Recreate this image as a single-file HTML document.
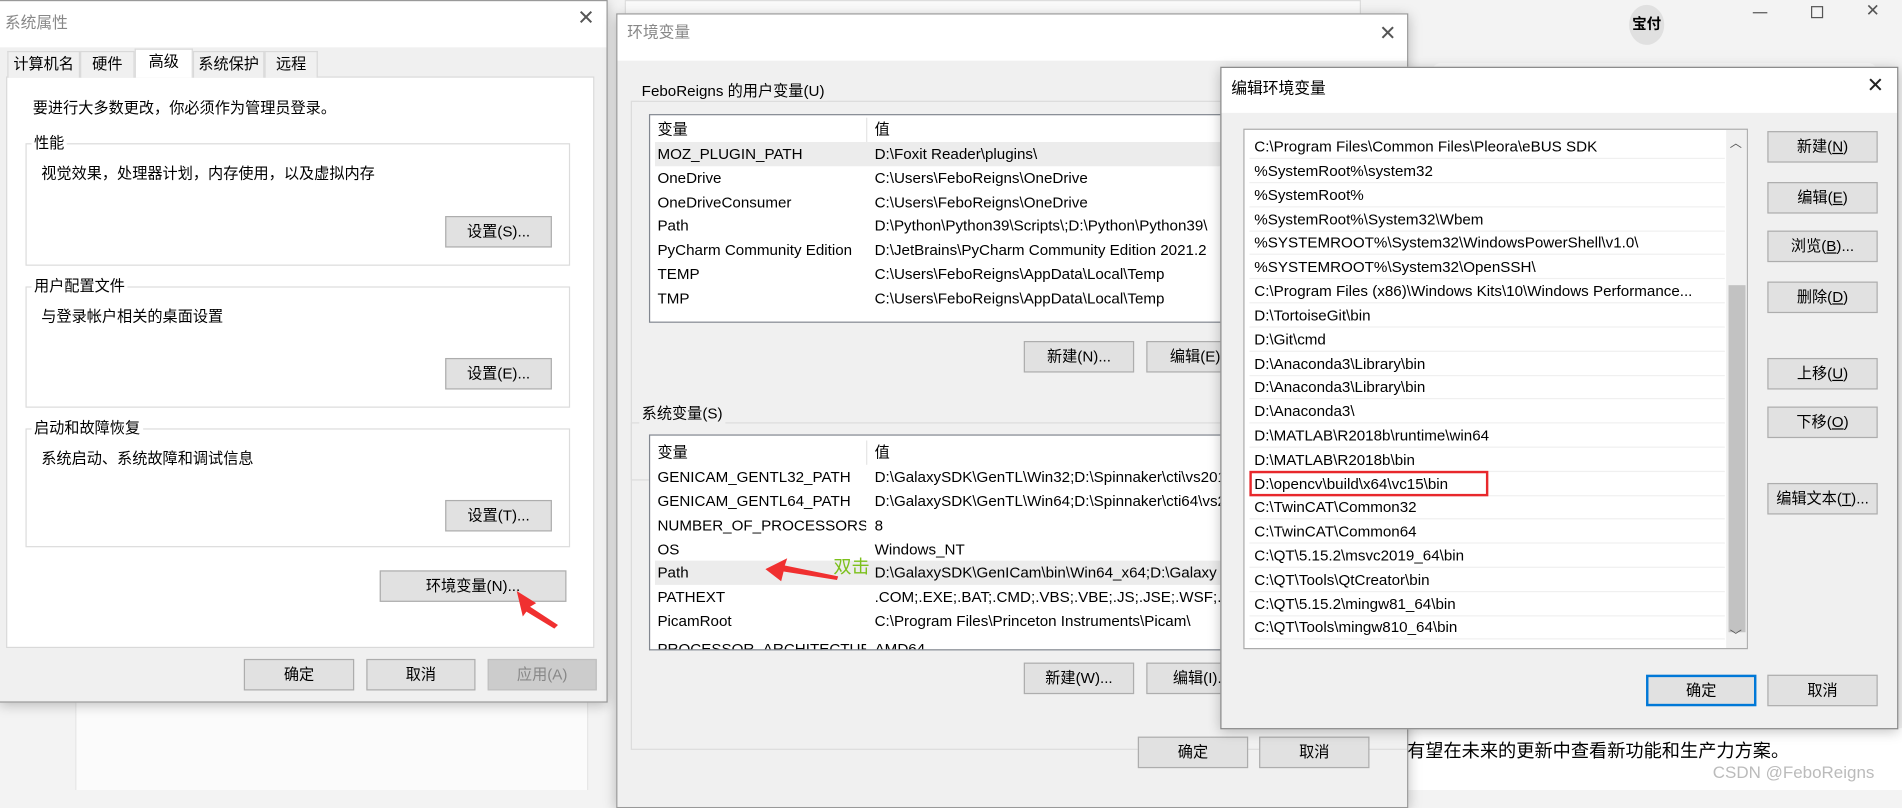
<!DOCTYPE html>
<html><head><meta charset="utf-8"><style>
html,body{margin:0;padding:0;width:1902px;height:790px;overflow:hidden;background:#f3f3f3}
#w{position:absolute;left:0;top:0;width:1568px;height:651px;transform:scale(1.2130,1.2135);transform-origin:0 0;font-family:"Liberation Sans","Noto Sans CJK SC",sans-serif;font-size:12.5px;color:#000}
.a{position:absolute}
.t{position:absolute;white-space:nowrap;line-height:16px}
.btn{position:absolute;background:#e1e1e1;border:1px solid #adadad;box-sizing:border-box;text-align:center;line-height:24px;height:26px;white-space:nowrap}
.dlg{position:absolute;background:#f0f0f0;border:1px solid #999;box-sizing:border-box;box-shadow:0 2px 10px rgba(0,0,0,.25);overflow:hidden}
.tb{position:absolute;left:0;right:0;top:0;background:#fff}
.x{position:absolute;font-size:17px;color:#555;font-family:"DejaVu Sans",sans-serif}
.grp{position:absolute;border:1px solid #dcdcdc}
.gl{position:absolute;padding:0 2px;white-space:nowrap;line-height:16px}
.list{position:absolute;background:#fff;border:1px solid #828790;box-sizing:border-box;overflow:hidden}
.row{position:absolute;left:0;right:0;height:20px;line-height:20px;white-space:nowrap}
.row span{position:absolute}
.row span:first-child{width:172px;overflow:hidden}
.er{position:absolute;left:4px;width:392px;height:20px;line-height:20px;border-bottom:1px solid #f0f0f0;box-sizing:border-box;padding-left:4px;white-space:nowrap}
.tab{position:absolute;height:22px;border:1px solid #d9d9d9;border-bottom:none;box-sizing:border-box;background:#f0f0f0;text-align:center;line-height:21px}
u{text-decoration:underline}
</style></head><body><div id="w">
<div class="a" style="left:62px;top:578px;width:421px;height:73px;background:#fbfbfb;border-left:1px solid #e5e5e5;border-right:1px solid #e5e5e5"></div>
<div class="a" style="left:1180px;top:52px;width:368px;height:599px;background:#fbfbfb;border-radius:8px"></div>
<div class="a" style="left:1160px;top:600px;width:408px;height:51px;background:#fff"></div>
<div class="a" style="left:515px;top:0;width:605px;height:14px;background:#fafafa;border:1px solid #ddd"></div>
<div class="a" style="left:1343px;top:4px;width:29px;height:33px;border-radius:50%;background:#e0e0e0;text-align:center;line-height:33px;font-weight:bold;font-size:12px">宝付</div>
<div class="a" style="left:1445px;top:10px;width:12px;height:1px;background:#555"></div>
<div class="a" style="left:1493px;top:5px;width:8px;height:8px;border:1px solid #555"></div>
<div class="x" style="left:1538px;top:1px;font-size:14px">✕</div>
<div class="t" style="left:1160px;top:612px;font-size:15px">有望在未来的更新中查看新功能和生产力方案。</div>
<div class="t" style="left:1412px;top:628px;font-size:14px;color:#bbb">CSDN @FeboReigns</div>

<div class="dlg" style="left:-1px;top:0;width:502px;height:579px">
 <div class="tb" style="height:38px"></div>
 <div class="t" style="left:4px;top:10px;color:#888;font-size:13px">系统属性</div>
 <div class="x" style="left:476px;top:4px">✕</div>
 <div class="a" style="left:5px;top:62px;width:485px;height:471px;background:#fff;border:1px solid #d9d9d9;box-sizing:border-box"></div>
 <div class="tab" style="left:6px;top:41px;width:60px">计算机名</div>
 <div class="tab" style="left:66px;top:41px;width:45px">硬件</div>
 <div class="tab" style="left:111px;top:39px;width:48px;height:24px;background:#fff;border-bottom:none">高级</div>
 <div class="tab" style="left:159px;top:41px;width:59px">系统保护</div>
 <div class="tab" style="left:218px;top:41px;width:44px">远程</div>
 <div class="t" style="left:27px;top:80px">要进行大多数更改，你必须作为管理员登录。</div>
 <div class="grp" style="left:21px;top:117px;width:447px;height:99px"></div><div class="gl" style="left:26px;top:109px;background:#fff">性能</div>
 <div class="t" style="left:34px;top:134px">视觉效果，处理器计划，内存使用，以及虚拟内存</div>
 <div class="btn" style="left:367px;top:177px;width:88px">设置(S)...</div>
 <div class="grp" style="left:21px;top:235px;width:447px;height:98px"></div><div class="gl" style="left:26px;top:227px;background:#fff">用户配置文件</div>
 <div class="t" style="left:34px;top:252px">与登录帐户相关的桌面设置</div>
 <div class="btn" style="left:367px;top:294px;width:88px">设置(E)...</div>
 <div class="grp" style="left:21px;top:352px;width:447px;height:96px"></div><div class="gl" style="left:26px;top:344px;background:#fff">启动和故障恢复</div>
 <div class="t" style="left:34px;top:369px">系统启动、系统故障和调试信息</div>
 <div class="btn" style="left:367px;top:411px;width:88px">设置(T)...</div>
 <div class="btn" style="left:313px;top:469px;width:154px">环境变量(N)...</div>
 <div class="btn" style="left:201px;top:542px;width:91px">确定</div>
 <div class="btn" style="left:302px;top:542px;width:90px">取消</div>
 <div class="btn" style="left:402px;top:542px;width:90px;background:#cccccc;border-color:#bfbfbf;color:#888">应用(A)</div>
 <svg class="a" style="left:410px;top:480px" width="60" height="45"><polygon points="16,6 32,16 27,19 50,34 47,37 24,23 21,27" fill="#f03030"/></svg>
</div>

<div class="dlg" style="left:508px;top:11px;width:653px;height:655px">
 <div class="tb" style="height:38px"></div>
 <div class="t" style="left:8px;top:7px;color:#888;font-size:13px">环境变量</div>
 <div class="x" style="left:628px;top:6px">✕</div>
 <div class="grp" style="left:11px;top:71px;width:640px;height:311px"></div>
 <div class="gl" style="left:18px;top:55px;background:#f0f0f0">FeboReigns 的用户变量(U)</div>
 <div class="list" style="left:26px;top:82px;width:620px;height:172px">
  <div class="row" style="top:2px"><span style="left:6px">变量</span><span style="left:185px">值</span></div>
  <div class="a" style="left:178px;top:2px;width:1px;height:20px;background:#e5e5e5"></div>
  <div class="row" style="top:22px;background:#ececec;left:4px"><span style="left:2px">MOZ_PLUGIN_PATH</span><span style="left:181px">D:\Foxit Reader\plugins\</span></div>
  <div class="row" style="top:42px"><span style="left:6px">OneDrive</span><span style="left:185px">C:\Users\FeboReigns\OneDrive</span></div>
  <div class="row" style="top:62px"><span style="left:6px">OneDriveConsumer</span><span style="left:185px">C:\Users\FeboReigns\OneDrive</span></div>
  <div class="row" style="top:81px"><span style="left:6px">Path</span><span style="left:185px">D:\Python\Python39\Scripts\;D:\Python\Python39\</span></div>
  <div class="row" style="top:101px"><span style="left:6px">PyCharm Community Edition</span><span style="left:185px">D:\JetBrains\PyCharm Community Edition 2021.2</span></div>
  <div class="row" style="top:121px"><span style="left:6px">TEMP</span><span style="left:185px">C:\Users\FeboReigns\AppData\Local\Temp</span></div>
  <div class="row" style="top:141px"><span style="left:6px">TMP</span><span style="left:185px">C:\Users\FeboReigns\AppData\Local\Temp</span></div>
 </div>
 <div class="btn" style="left:335px;top:269px;width:91px">新建(N)...</div>
 <div class="btn" style="left:436px;top:269px;width:91px">编辑(E)...</div>
 <div class="grp" style="left:11px;top:336px;width:640px;height:268px"></div>
 <div class="gl" style="left:18px;top:321px;background:#f0f0f0">系统变量(S)</div>
 <div class="list" style="left:26px;top:346px;width:620px;height:178px">
  <div class="row" style="top:4px"><span style="left:6px">变量</span><span style="left:185px">值</span></div>
  <div class="a" style="left:178px;top:4px;width:1px;height:20px;background:#e5e5e5"></div>
  <div class="row" style="top:24px"><span style="left:6px">GENICAM_GENTL32_PATH</span><span style="left:185px">D:\GalaxySDK\GenTL\Win32;D:\Spinnaker\cti\vs2015</span></div>
  <div class="row" style="top:44px"><span style="left:6px">GENICAM_GENTL64_PATH</span><span style="left:185px">D:\GalaxySDK\GenTL\Win64;D:\Spinnaker\cti64\vs2015</span></div>
  <div class="row" style="top:64px"><span style="left:6px">NUMBER_OF_PROCESSORS</span><span style="left:185px">8</span></div>
  <div class="row" style="top:84px"><span style="left:6px">OS</span><span style="left:185px">Windows_NT</span></div>
  <div class="row" style="top:103px;background:#ececec;left:4px"><span style="left:2px">Path</span><span style="left:181px">D:\GalaxySDK\GenICam\bin\Win64_x64;D:\Galaxy</span></div>
  <div class="row" style="top:123px"><span style="left:6px">PATHEXT</span><span style="left:185px">.COM;.EXE;.BAT;.CMD;.VBS;.VBE;.JS;.JSE;.WSF;.WSH</span></div>
  <div class="row" style="top:143px"><span style="left:6px">PicamRoot</span><span style="left:185px">C:\Program Files\Princeton Instruments\Picam\</span></div>
  <div class="row" style="top:166px"><span style="left:6px">PROCESSOR_ARCHITECTURE</span><span style="left:185px">AMD64</span></div>
 </div>
 <svg class="a" style="left:118px;top:445px" width="70" height="30"><polygon points="4,12 22,3 20,9 64,18 63,21 19,14 17,22" fill="#f03030"/></svg>
 <div class="t" style="left:178px;top:448px;color:#7cc01c;font-size:15px">双击</div>
 <div class="btn" style="left:335px;top:534px;width:91px">新建(W)...</div>
 <div class="btn" style="left:436px;top:534px;width:91px">编辑(I)...</div>
 <div class="btn" style="left:429px;top:595px;width:91px">确定</div>
 <div class="btn" style="left:529px;top:595px;width:91px">取消</div>
</div>

<div class="dlg" style="left:1006px;top:55px;width:559px;height:546px;border-color:#888">
 <div class="tb" style="height:37px"></div>
 <div class="t" style="left:8px;top:9px;font-size:13px">编辑环境变量</div>
 <div class="x" style="left:532px;top:5px;color:#222">✕</div>
 <div class="list" style="left:18px;top:50px;width:416px;height:429px;border-color:#aaa">
  <div class="er" style="top:4px">C:\Program Files\Common Files\Pleora\eBUS SDK</div>
  <div class="er" style="top:24px">%SystemRoot%\system32</div>
  <div class="er" style="top:44px">%SystemRoot%</div>
  <div class="er" style="top:64px">%SystemRoot%\System32\Wbem</div>
  <div class="er" style="top:83px">%SYSTEMROOT%\System32\WindowsPowerShell\v1.0\</div>
  <div class="er" style="top:103px">%SYSTEMROOT%\System32\OpenSSH\</div>
  <div class="er" style="top:123px">C:\Program Files (x86)\Windows Kits\10\Windows Performance...</div>
  <div class="er" style="top:143px">D:\TortoiseGit\bin</div>
  <div class="er" style="top:163px">D:\Git\cmd</div>
  <div class="er" style="top:183px">D:\Anaconda3\Library\bin</div>
  <div class="er" style="top:202px">D:\Anaconda3\Library\bin</div>
  <div class="er" style="top:222px">D:\Anaconda3\</div>
  <div class="er" style="top:242px">D:\MATLAB\R2018b\runtime\win64</div>
  <div class="er" style="top:262px">D:\MATLAB\R2018b\bin</div>
  <div class="er" style="top:282px">D:\opencv\build\x64\vc15\bin</div>
  <div class="er" style="top:301px">C:\TwinCAT\Common32</div>
  <div class="er" style="top:321px">C:\TwinCAT\Common64</div>
  <div class="er" style="top:341px">C:\QT\5.15.2\msvc2019_64\bin</div>
  <div class="er" style="top:361px">C:\QT\Tools\QtCreator\bin</div>
  <div class="er" style="top:381px">C:\QT\5.15.2\mingw81_64\bin</div>
  <div class="er" style="top:400px">C:\QT\Tools\mingw810_64\bin</div>
  <div class="a" style="left:4px;top:281px;width:197px;height:21px;border:2px solid #e8282c;box-sizing:border-box"></div>
  <div class="a" style="left:397px;top:0;width:18px;height:429px;background:#f0f0f0"></div>
  <div class="a" style="left:399px;top:128px;width:14px;height:286px;background:#c2c2c2"></div>
  <div class="t" style="left:400px;top:4px;font-size:10px;color:#555">︿</div>
  <div class="t" style="left:400px;top:410px;font-size:10px;color:#555">﹀</div>
 </div>
 <div class="btn" style="left:450px;top:52px;width:91px">新建(<u>N</u>)</div>
 <div class="btn" style="left:450px;top:94px;width:91px">编辑(<u>E</u>)</div>
 <div class="btn" style="left:450px;top:134px;width:91px">浏览(<u>B</u>)...</div>
 <div class="btn" style="left:450px;top:176px;width:91px">删除(<u>D</u>)</div>
 <div class="btn" style="left:450px;top:239px;width:91px">上移(<u>U</u>)</div>
 <div class="btn" style="left:450px;top:279px;width:91px">下移(<u>O</u>)</div>
 <div class="btn" style="left:450px;top:342px;width:91px">编辑文本(<u>T</u>)...</div>
 <div class="btn" style="left:350px;top:500px;width:91px;border:2px solid #0078d7;line-height:22px">确定</div>
 <div class="btn" style="left:450px;top:500px;width:91px">取消</div>
</div>
</div></body></html>
